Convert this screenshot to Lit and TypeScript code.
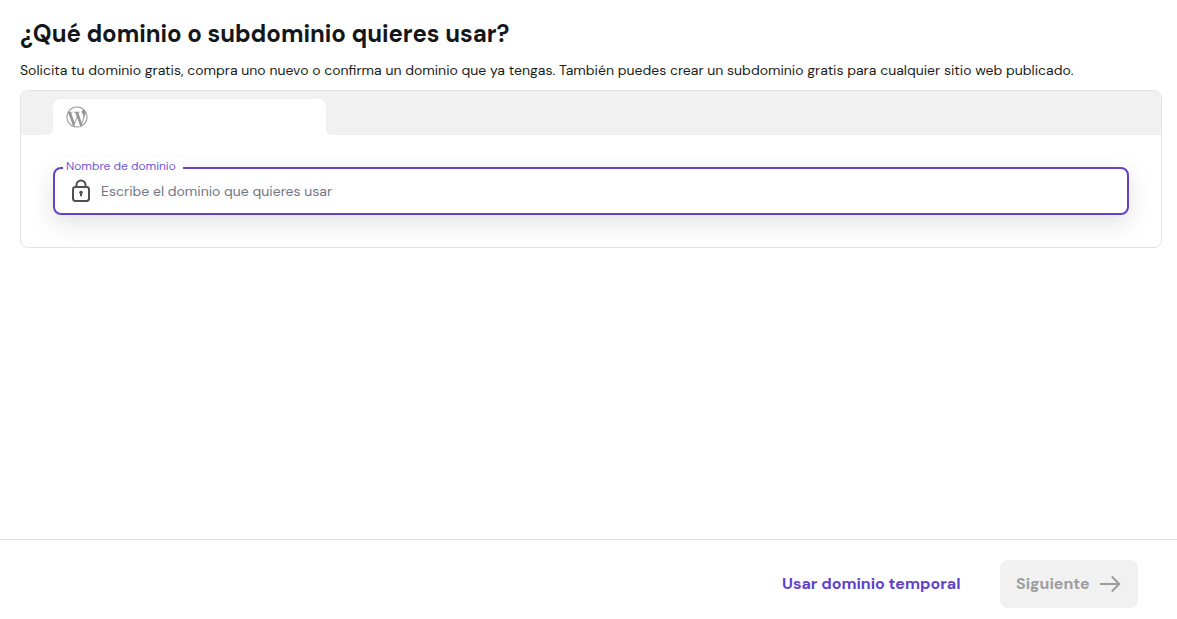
import { LitElement, html, css } from "lit";
import { customElement } from "lit/decorators.js";

@customElement("app-root")
export class AppRoot extends LitElement {
  static styles = css`
    :host {
      display: flex;
      flex-direction: column;
      height: 619px;
      box-sizing: border-box;
      overflow: hidden;
      background: #fff;
      color: #1b1d21;
      font-family: "DM Sans", Inter, "Open Sans", sans-serif;
    }
    * { box-sizing: border-box; }
    main { flex: 1; padding: 18px 15px 0 20px; }
    h1 {
      margin: 0;
      font-size: 24px;
      line-height: 32px;
      font-weight: 700;
      letter-spacing: -0.04px;
      color: #14171a;
      white-space: nowrap;
    }
    .lead {
      margin: 10px 0 0;
      font-size: 14px;
      line-height: 20px;
      white-space: nowrap;
    }
    .browser {
      margin-top: 10px;
      height: 158px;
      border: 1px solid #e3e3e5;
      border-radius: 8px;
      overflow: hidden;
    }
    .tabs { display: flex; height: 44px; }
    .side { width: 32px; background: #f1f1f1; border-bottom-right-radius: 6px; }
    .rest { flex: 1; background: #f1f1f1; border-bottom-left-radius: 6px; }
    .slot { width: 273px; padding-top: 8px; background: linear-gradient(#f1f1f1 20px, #fff 20px); }
    .tab {
      display: flex;
      align-items: center;
      height: 36px;
      padding-left: 13px;
      background: #fff;
      border-radius: 8px 8px 0 0;
    }
    .tab svg { display: block; }
    .body { padding: 32px; }
    .field {
      position: relative;
      display: flex;
      align-items: center;
      height: 48px;
      padding-left: 14px;
      border: 2px solid #6442c6;
      border-radius: 8px;
      background: #fff;
      box-shadow: 0 8px 24px rgba(40, 40, 50, 0.14);
    }
    .label {
      position: absolute;
      left: 8px;
      top: -11px;
      width: 120px;
      padding-left: 3px;
      background: #fff;
      color: #7556d6;
      font-size: 12px;
      line-height: 16px;
      white-space: nowrap;
      letter-spacing: -0.04px;
    }
    .hint {
      margin-left: 8px;
      font-size: 14px;
      color: #727586;
      white-space: nowrap;
    }
    footer {
      display: flex;
      justify-content: flex-end;
      align-items: flex-start;
      height: 80px;
      padding: 20px 39px 0 0;
      border-top: 1px solid #e3e3e5;
      font-size: 16px;
      font-weight: 700;
      line-height: 48px;
      white-space: nowrap;
    }
    .temp { width: 218px; color: #6042ca; }
    .next {
      display: flex;
      align-items: center;
      justify-content: space-between;
      width: 138px;
      height: 48px;
      padding: 0 16px;
      border-radius: 8px;
      background: #f1f1f1;
      color: #9d9d9f;
    }
  `;

  render() {
    return html`
      <main>
        <h1>¿Qué dominio o subdominio quieres usar?</h1>
        <p class="lead">Solicita tu dominio gratis, compra uno nuevo o confirma un dominio que ya tengas. También puedes crear un subdominio gratis para cualquier sitio web publicado.</p>
        <section class="browser">
          <div class="tabs">
            <div class="side"></div>
            <div class="slot">
              <div class="tab">
                <svg width="22" height="22" viewBox="-0.5 -0.5 25 25" fill="#969696">
                  <path d="M21.469 6.825c.84 1.537 1.318 3.3 1.318 5.175 0 3.979-2.156 7.456-5.363 9.325l3.295-9.527c.615-1.54.82-2.771.82-3.864 0-.405-.026-.78-.07-1.11m-7.981.105c.647-.03 1.232-.105 1.232-.105.582-.075.514-.93-.067-.899 0 0-1.755.135-2.88.135-1.064 0-2.85-.15-2.85-.15-.585-.03-.661.855-.075.885 0 0 .54.061 1.125.09l1.68 4.605-2.37 7.08L5.354 6.9c.649-.03 1.234-.1 1.234-.1.585-.075.516-.93-.065-.896 0 0-1.746.138-2.874.138-.2 0-.438-.008-.69-.015C4.911 3.15 8.235 1.215 12 1.215c2.809 0 5.365 1.072 7.286 2.833-.046-.003-.091-.009-.141-.009-1.06 0-1.812.923-1.812 1.914 0 .89.513 1.643 1.06 2.531.411.72.89 1.643.89 2.977 0 .915-.354 1.994-.821 3.479l-1.075 3.585-3.9-11.61.001.014zM12 22.784c-1.059 0-2.081-.153-3.048-.437l3.237-9.406 3.315 9.087c.024.053.05.101.078.149-1.12.393-2.325.609-3.582.609M1.211 12c0-1.564.336-3.05.935-4.39L7.29 21.709C3.694 19.96 1.212 16.271 1.211 12M12 0C5.385 0 0 5.385 0 12s5.385 12 12 12 12-5.385 12-12S18.615 0 12 0"/>
                </svg>
              </div>
            </div>
            <div class="rest"></div>
          </div>
          <div class="body">
            <div class="field">
              <span class="label">Nombre de dominio</span>
              <svg width="24" height="24" viewBox="0 0 24 24" fill="none" stroke="#505054" stroke-width="2">
                <rect x="4" y="8" width="16" height="14" rx="2.4"/>
                <path d="M7.5 8V6a4.500 4.500 0 0 1 9 0V8"/>
                <circle cx="12" cy="13.5" r="1.8" fill="#505054" stroke="none"/>
                <path d="M12 14v3.300"/>
              </svg>
              <span class="hint">Escribe el dominio que quieres usar</span>
            </div>
          </div>
        </section>
      </main>
      <footer>
        <span class="temp">Usar dominio temporal</span>
        <div class="next">
          <span>Siguiente</span>
          <svg width="22" height="18" viewBox="0 0 22 18" fill="none" stroke="#9d9d9f" stroke-width="2">
            <path d="M0 9h19.500M11.800 1.500 19.300 9l-7.500 7.500"/>
          </svg>
        </div>
      </footer>
    `;
  }
}
